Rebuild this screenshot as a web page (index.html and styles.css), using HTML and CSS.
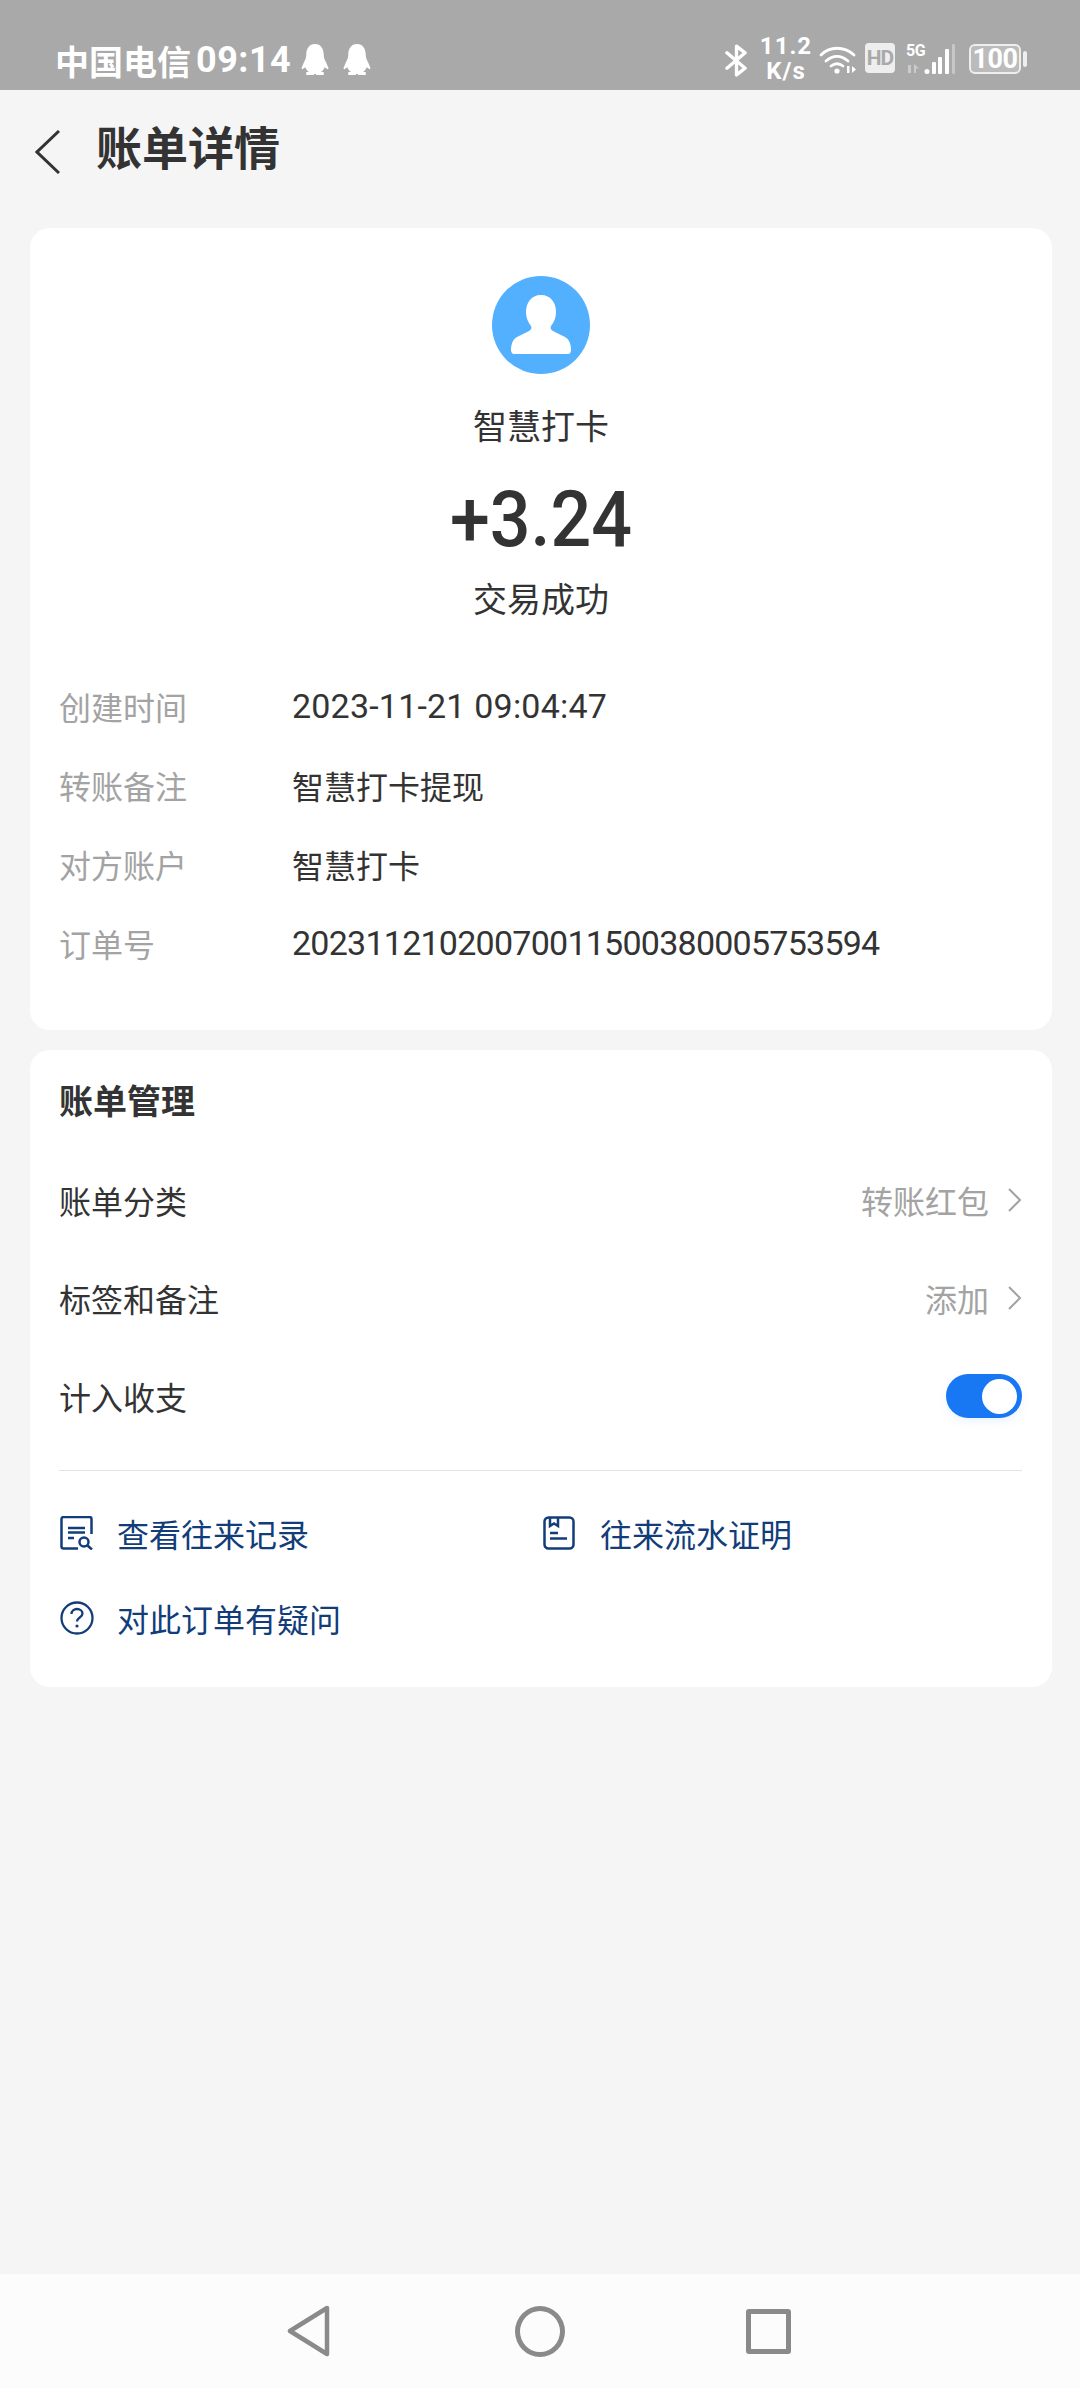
FILE: index.html
```html
<!DOCTYPE html>
<html lang="zh-CN">
<head>
    <meta charset="UTF-8">
    <meta name="viewport" content="width=device-width, initial-scale=1.0">
    <title>账单详情</title>
    <link rel="stylesheet" href="styles.css">
</head>
<body>
    <div class="statusBar">
        <div class="statusLeft">
            <span class="carrier">中国电信</span>
            <span class="clock">09:14</span>
            <svg class="penguin" viewBox="0 0 28 33"><path d="M14 0c-6 0-9 5-9 11 0 3-1 5-2.500 8L0 25l1 1 3-2c1 2 2 4 4 5H5v3h8v-1h2v1h8v-3h-3c2-1 3-3 4-5l3 2 1-1-2.500-6C24 16 23 14 23 11c0-6-3-11-9-11z"/></svg>
            <svg class="penguin" viewBox="0 0 28 33"><path d="M14 0c-6 0-9 5-9 11 0 3-1 5-2.500 8L0 25l1 1 3-2c1 2 2 4 4 5H5v3h8v-1h2v1h8v-3h-3c2-1 3-3 4-5l3 2 1-1-2.500-6C24 16 23 14 23 11c0-6-3-11-9-11z"/></svg>
        </div>
        <div class="statusRight">
            <svg class="bluetooth" viewBox="0 0 24 34"><path d="M2 9l19 16-9 7V2l9 7L2 25" fill="none" stroke="#fff" stroke-width="3.500" stroke-linejoin="round" stroke-linecap="round"/></svg>
            <div class="speed"><span>11.2</span><span>K/s</span></div>
            <svg class="wifi" viewBox="0 0 38 30">
                <g fill="none" stroke="#fff" stroke-width="2.800" stroke-linecap="round">
                    <path d="M2 11C11 2 25 2 35 11"/>
                    <path d="M7 17c7-6 15-6 22 0"/>
                    <path d="M12 22c4-3 8-3 12 0"/>
                </g>
                <circle cx="18" cy="27" r="2.600" fill="#fff"/>
                <path d="M28 22h2.500v7H28zM33 22l4 3.500-4 3.500z" fill="#fff"/>
            </svg>
            <span class="hdBadge">HD</span>
            <div class="signal">
                <span class="netType">5G</span>
                <svg class="bars" viewBox="0 0 50 30">
                    <path d="M3 21h3v8H3zM9 20l5 4.500-3 0v4.500H9z" fill="#fff" opacity=".4"/>
                    <circle cx="22" cy="27.500" r="2.500" fill="#fff"/>
                    <rect x="27" y="18" width="4" height="12" rx="1" fill="#fff"/>
                    <rect x="33" y="13" width="4" height="17" rx="1" fill="#fff"/>
                    <rect x="40" y="5" width="4" height="25" rx="1" fill="#fff"/>
                    <rect x="47" y="0" width="3" height="30" rx="1" fill="#fff" opacity=".35"/>
                </svg>
            </div>
            <div class="battery"><span class="batteryBody">100</span><span class="batteryNub"></span></div>
        </div>
    </div>

    <header class="pageHeader">
        <svg class="backIcon" viewBox="0 0 25 44"><path d="M24 1L2 22l22 21" fill="none" stroke="#333" stroke-width="3"/></svg>
        <h1>账单详情</h1>
    </header>

    <main class="content">
        <section class="card summaryCard">
            <div class="summary">
                <svg class="avatar" viewBox="0 0 98 98">
                    <circle cx="49" cy="49" r="49" fill="#52b0ff"/>
                    <path d="M49 19c-10 0-15 8-15 17 0 6 2 10 5 14 1 2 0 4-2 5l-12 6c-4 2-6 7-6 13 0 2 1 4 3 4h54c2 0 3-2 3-4 0-6-2-11-6-13l-12-6c-2-1-3-3-2-5 3-4 5-8 5-14 0-9-5-17-15-17z" fill="#fff"/>
                </svg>
                <p class="payee">智慧打卡</p>
                <p class="amount">+3.24</p>
                <p class="tradeStatus">交易成功</p>
            </div>
            <dl class="details">
                <div class="detailRow"><dt>创建时间</dt><dd class="dateValue">2023-11-21 09:04:47</dd></div>
                <div class="detailRow"><dt>转账备注</dt><dd>智慧打卡提现</dd></div>
                <div class="detailRow"><dt>对方账户</dt><dd>智慧打卡</dd></div>
                <div class="detailRow"><dt>订单号</dt><dd class="orderValue">20231121020070011500380005753594</dd></div>
            </dl>
        </section>

        <section class="card manageCard">
            <h2>账单管理</h2>
            <div class="manageRow">
                <span>账单分类</span>
                <span class="rowValue">转账红包<svg class="chevron" viewBox="0 0 14 24"><path d="M1 1l11 11L1 23" fill="none" stroke="#a3a3a3" stroke-width="2"/></svg></span>
            </div>
            <div class="manageRow">
                <span>标签和备注</span>
                <span class="rowValue">添加<svg class="chevron" viewBox="0 0 14 24"><path d="M1 1l11 11L1 23" fill="none" stroke="#a3a3a3" stroke-width="2"/></svg></span>
            </div>
            <div class="manageRow">
                <span>计入收支</span>
                <span class="toggle"><span class="toggleKnob"></span></span>
            </div>
            <div class="linkGrid">
                <a class="linkItem">
                    <svg class="linkIcon" viewBox="0 0 34 34">
                        <g fill="none" stroke="#123d7a" stroke-width="2.500">
                            <path d="M18 32.500H3.500a2 2 0 0 1-2-2V3a2 2 0 0 1 2-2h26a2 2 0 0 1 2 2v15"/>
                            <path d="M8 12h17M8 16.500h17M8 22h6"/>
                            <circle cx="24" cy="26" r="4.500"/>
                            <path d="M27.500 29.500l4.500 4"/>
                        </g>
                    </svg>
                    <span>查看往来记录</span>
                </a>
                <a class="linkItem">
                    <svg class="linkIcon" viewBox="0 0 34 34">
                        <g fill="none" stroke="#123d7a" stroke-width="2.500">
                            <rect x="1.500" y="1.500" width="29" height="31" rx="4"/>
                            <path d="M7 2v8l4-2.500 4 2.500V2"/>
                            <path d="M7 17h8M7 22.500h17"/>
                        </g>
                    </svg>
                    <span>往来流水证明</span>
                </a>
                <a class="linkItem">
                    <svg class="linkIcon" viewBox="0 0 34 34">
                        <circle cx="17" cy="17" r="15.500" fill="none" stroke="#123d7a" stroke-width="2.300"/>
                        <path d="M11.500 13c0-3 2.500-5 5.500-5s5.500 2 5.500 4.500c0 4-5.500 4-5.500 8" fill="none" stroke="#123d7a" stroke-width="2.300"/>
                        <circle cx="17" cy="25" r="1.600" fill="#123d7a"/>
                    </svg>
                    <span>对此订单有疑问</span>
                </a>
            </div>
        </section>
    </main>

    <nav class="navBar">
        <svg class="navBack" viewBox="0 0 44 52"><path d="M40 3L3 26l37 23z" fill="none" stroke="#8a8a8a" stroke-width="4.500" stroke-linejoin="round"/></svg>
        <span class="navHome"></span>
        <span class="navRecent"></span>
    </nav>
</body>
</html>
```

FILE: styles.css
```css
/* styles.css */
* {
    box-sizing: border-box;
}

html, body {
    margin: 0;
    padding: 0;
}

body {
    width: 1080px;
    height: 2388px;
    display: flex;
    flex-direction: column;
    background-color: #f5f5f5;
    color: #333;
    font-family: Roboto, "Noto Sans CJK SC", sans-serif;
    font-size: 32px;
    overflow: hidden;
}

/* status bar */
.statusBar {
    height: 90px;
    flex-shrink: 0;
    display: flex;
    justify-content: space-between;
    align-items: flex-start;
    padding: 38px 53px 0 55px;
    background-color: #a9a9a9;
    color: #fff;
}

.statusLeft {
    display: flex;
    align-items: center;
    height: 44px;
}

.carrier {
    font-size: 34px;
    font-weight: 700;
}

.clock {
    margin-left: 5px;
    font-size: 36px;
    font-weight: 700;
    letter-spacing: 0.5px;
}

.penguin {
    width: 28px;
    height: 32px;
    margin-left: 14px;
    fill: #fff;
}

.clock + .penguin {
    margin-left: 10px;
}

.statusRight {
    display: flex;
    align-items: flex-start;
}

.bluetooth {
    width: 23px;
    height: 33px;
    margin-top: 6px;
}

.speed {
    display: flex;
    flex-direction: column;
    align-items: center;
    width: 50px;
    margin: -4px 0 0 13px;
    font-size: 24px;
    font-weight: 700;
    line-height: 25px;
    letter-spacing: 1px;
}

.wifi {
    width: 38px;
    height: 30px;
    margin: 6px 0 0 8px;
}

.hdBadge {
    width: 30px;
    height: 30px;
    margin: 5px 0 0 8px;
    background-color: #eee;
    border-radius: 4px;
    color: #a9a9a9;
    font-size: 21px;
    font-weight: 700;
    line-height: 30px;
    text-align: center;
    letter-spacing: -1px;
}

.signal {
    position: relative;
    width: 50px;
    height: 30px;
    margin: 6px 0 0 10px;
}

.netType {
    position: absolute;
    left: 1px;
    top: -2px;
    font-size: 16px;
    font-weight: 700;
    line-height: 18px;
    letter-spacing: -0.5px;
}

.bars {
    display: block;
    width: 50px;
    height: 30px;
}

.battery {
    display: flex;
    align-items: center;
    margin: 6px 0 0 14px;
}

.batteryBody {
    width: 52px;
    height: 30px;
    border: 2px solid #eee;
    border-radius: 6px;
    background-color: #bbb;
    font-size: 27px;
    font-weight: 700;
    line-height: 26px;
    text-align: center;
    letter-spacing: -0.5px;
}

.batteryNub {
    width: 4px;
    height: 16px;
    margin-left: 2px;
    background-color: #eee;
    border-radius: 2px;
}

/* header */
.pageHeader {
    height: 138px;
    flex-shrink: 0;
    display: flex;
    align-items: center;
    padding: 0 0 14px 35px;
}

.backIcon {
    width: 25px;
    height: 44px;
}

h1 {
    margin: 0 0 6px 36px;
    font-size: 46px;
    font-weight: 700;
    line-height: 60px;
}

/* cards */
.content {
    flex: 1;
    padding: 0 28px 0 30px;
}

.card {
    background-color: #fff;
    border-radius: 20px;
}

.summaryCard {
    height: 802px;
    padding-top: 48px;
}

.summary {
    display: flex;
    flex-direction: column;
    align-items: center;
}

.avatar {
    width: 98px;
    height: 98px;
}

.payee, .tradeStatus {
    margin: 0;
    font-size: 34px;
    line-height: 48px;
}

.payee {
    margin-top: 29px;
}

.amount {
    margin: 23px 0 10px;
    font-size: 78px;
    font-weight: 500;
    line-height: 92px;
    transform: scaleX(0.92);
}

.details {
    margin: 42px 0 0;
    padding: 0 29px;
}

.detailRow {
    display: flex;
    align-items: center;
    height: 79px;
}

dt {
    width: 233px;
    color: #a3a3a3;
}

dd {
    margin: 0;
}

.dateValue {
    font-size: 34px;
    letter-spacing: 0.2px;
}

.orderValue {
    font-size: 34px;
    letter-spacing: -0.75px;
}

.manageCard {
    height: 637px;
    margin-top: 20px;
    padding: 0 30px 0 29px;
}

h2 {
    margin: 0;
    padding-top: 28px;
    height: 101px;
    font-size: 34px;
    font-weight: 700;
    line-height: 48px;
}

.manageRow {
    display: flex;
    justify-content: space-between;
    align-items: center;
    height: 98px;
}

.rowValue {
    display: flex;
    align-items: center;
    color: #a3a3a3;
}

.chevron {
    width: 14px;
    height: 24px;
    margin-left: 19px;
}

.toggle {
    display: flex;
    justify-content: flex-end;
    align-items: center;
    width: 76px;
    height: 44px;
    padding-right: 5px;
    background-color: #1877f2;
    border-radius: 22px;
    box-shadow: 0 4px 10px rgba(24, 119, 242, 0.08);
}

.toggleKnob {
    width: 35px;
    height: 35px;
    background-color: #fff;
    border-radius: 50%;
}

.linkGrid {
    display: grid;
    grid-template-columns: 483px 1fr;
    grid-auto-rows: 85px;
    margin-top: 25px;
    padding-top: 19px;
    border-top: 1px solid #e2e2e2;
}

.linkItem {
    display: flex;
    align-items: center;
    color: #123d7a;
}

.linkIcon {
    width: 34px;
    height: 34px;
    margin: 0 23px 0 1px;
}

/* navigation bar */
.navBar {
    height: 114px;
    flex-shrink: 0;
    display: flex;
    align-items: center;
    padding-left: 287px;
    background-color: #fcfcfc;
}

.navBack {
    width: 44px;
    height: 52px;
    margin-right: 184px;
}

.navHome {
    width: 50px;
    height: 51px;
    margin-right: 181px;
    border: 5px solid #8a8a8a;
    border-radius: 50%;
}

.navRecent {
    width: 45px;
    height: 45px;
    border: 5px solid #8a8a8a;
    border-radius: 3px;
}
```
